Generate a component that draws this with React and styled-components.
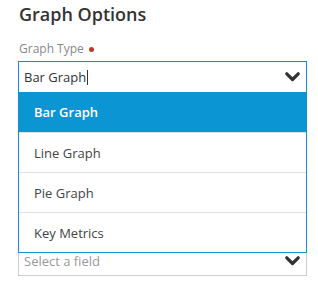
import React from "react";
import styled, { createGlobalStyle } from "styled-components";

const Global = createGlobalStyle`
  html, body { margin: 0; padding: 0; background: #fff; }
  body { font-family: "Open Sans", "Noto Sans", sans-serif; }
  * { box-sizing: border-box; }
`;

const Page = styled.div`
  width: 318px;
  height: 282px;
  padding: 2px 11px 0 18px;
  overflow: hidden;
`;

const Title = styled.h2`
  margin: 0 0 0 1px;
  font-size: 18px;
  font-weight: 600;
  line-height: 24px;
  color: #333;
`;

const Label = styled.div`
  margin: 14px 0 0 1px;
  font-size: 12px;
  line-height: 17px;
  color: #888;
  display: flex;
  align-items: center;
  gap: 5px;
`;

const Required = styled.span`
  width: 5px;
  height: 5px;
  border-radius: 50%;
  background: #c0392b;
  margin-top: 1px;
`;

const Combo = styled.div`
  position: relative;
  margin-top: 4px;
  z-index: 2;
`;

const Control = styled.div`
  height: 31px;
  border: 1px solid ${(p) => (p.$open ? "#0b96d3" : "#ccc")};
  border-bottom: ${(p) => (p.$open ? "none" : "1px solid #ccc")};
  display: flex;
  align-items: center;
  padding: 0 6px 0 5px;
  font-size: 13px;
  color: ${(p) => (p.$placeholder ? "#999" : "#333")};
`;

const Value = styled.span`
  flex: 1;
  display: flex;
  align-items: center;
`;

const Caret = styled.span`
  display: inline-block;
  width: 1px;
  height: 15px;
  background: #333;
  margin-left: 1px;
`;

const Menu = styled.ul`
  position: absolute;
  top: 100%;
  left: 0;
  right: 0;
  margin: 0;
  padding: 0;
  list-style: none;
  background: #fff;
  border: 1px solid #0b96d3;
  border-top: none;
`;

const Item = styled.li`
  height: 40px;
  display: flex;
  align-items: center;
  padding-left: 15px;
  font-size: 13px;
  background: ${(p) => (p.$active ? "#0b96d3" : "#fff")};
  color: ${(p) => (p.$active ? "#fff" : "#444")};
  font-weight: ${(p) => (p.$active ? 600 : 400)};
  & + & {
    border-top: 1px solid #e0e0e0;
  }
`;

const NextField = styled.div`
  padding-top: 153px;
`;

const Chevron = () => (
  <svg width="15" height="10" viewBox="0 0 15 10">
    <path
      d="M1.8 1.8 L7.5 7.5 L13.2 1.8"
      fill="none"
      stroke="#333"
      strokeWidth="3.2"
      strokeLinecap="round"
      strokeLinejoin="round"
    />
  </svg>
);

const options = ["Bar Graph", "Line Graph", "Pie Graph", "Key Metrics"];

export default function App() {
  return (
    <>
      <Global />
      <Page>
        <Title>Graph Options</Title>
        <Label>
          Graph Type <Required />
        </Label>
        <Combo>
          <Control $open>
            <Value>
              Bar Graph
              <Caret />
            </Value>
            <Chevron />
          </Control>
          <Menu>
            {options.map((o, i) => (
              <Item key={o} $active={i === 0}>
                {o}
              </Item>
            ))}
          </Menu>
        </Combo>
        <NextField>
          <Control $placeholder>
            <Value>Select a field</Value>
            <Chevron />
          </Control>
        </NextField>
      </Page>
    </>
  );
}
